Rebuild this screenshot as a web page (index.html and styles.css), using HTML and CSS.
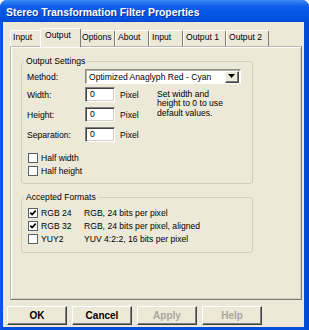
FILE: index.html
```html
<!DOCTYPE html>
<html>
<head>
<meta charset="utf-8">
<title>Stereo Transformation Filter Properties</title>
<link rel="stylesheet" href="styles.css">
</head>
<body>
<div class="window">
  <div class="titlebar">Stereo Transformation Filter Properties</div>
  <div class="client">
    <div class="tabs">
      <div class="tab">Input</div>
      <div class="tab sel">Output</div>
      <div class="tab">Options</div>
      <div class="tab">About</div>
      <div class="tab">Input</div>
      <div class="tab">Output 1</div>
      <div class="tab">Output 2</div>
    </div>
    <div class="panel">
      <fieldset class="group g1">
        <legend>Output Settings</legend>
        <div class="gbody g1body">
          <div class="method">
            <span class="lbl">Method:</span>
            <div class="combo">
              <span class="combo-text">Optimized Anaglyph Red - Cyan</span>
              <span class="drop"><svg width="7" height="4" viewBox="0 0 7 4"><path d="M0 0H7L3.5 4Z" fill="#000"/></svg></span>
            </div>
          </div>
          <div class="fields">
            <span class="lbl r1">Width:</span><div class="edit r1">0</div><span class="unit r1">Pixel</span>
            <span class="lbl r2">Height:</span><div class="edit r2">0</div><span class="unit r2">Pixel</span>
            <span class="lbl r3">Separation:</span><div class="edit r3">0</div><span class="unit r3">Pixel</span>
            <p class="note">Set width and<br>height to 0 to use<br>default values.</p>
          </div>
          <div class="checks">
            <div class="chk"><svg class="box" width="10" height="10" viewBox="0 0 10 10"><rect x="0.5" y="0.5" width="9" height="9" fill="#fff" stroke="#56606b"/></svg><span>Half width</span></div>
            <div class="chk"><svg class="box" width="10" height="10" viewBox="0 0 10 10"><rect x="0.5" y="0.5" width="9" height="9" fill="#fff" stroke="#56606b"/></svg><span>Half height</span></div>
          </div>
        </div>
      </fieldset>
      <fieldset class="group g2">
        <legend>Accepted Formats</legend>
        <div class="gbody formats">
          <svg class="box" width="10" height="10" viewBox="0 0 10 10"><rect x="0.5" y="0.5" width="9" height="9" fill="#fff" stroke="#56606b"/><path d="M2.3 4.6L4.1 6.6L7.7 2.6" fill="none" stroke="#000" stroke-width="1.6"/></svg>
          <span>RGB 24</span><span>RGB, 24 bits per pixel</span>
          <svg class="box" width="10" height="10" viewBox="0 0 10 10"><rect x="0.5" y="0.5" width="9" height="9" fill="#fff" stroke="#56606b"/><path d="M2.3 4.6L4.1 6.6L7.7 2.6" fill="none" stroke="#000" stroke-width="1.6"/></svg>
          <span>RGB 32</span><span>RGB, 24 bits per pixel, aligned</span>
          <svg class="box" width="10" height="10" viewBox="0 0 10 10"><rect x="0.5" y="0.5" width="9" height="9" fill="#fff" stroke="#56606b"/></svg>
          <span>YUY2</span><span>YUV 4:2:2, 16 bits per pixel</span>
        </div>
      </fieldset>
    </div>
    <div class="buttons">
      <button class="btn">OK</button>
      <button class="btn">Cancel</button>
      <button class="btn dis">Apply</button>
      <button class="btn dis">Help</button>
    </div>
  </div>
</div>
</body>
</html>
```
FILE: styles.css
```css
html, body {
  margin: 0;
  padding: 0;
  background: #fff;
}
body {
  font-family: "Liberation Sans", Arial, sans-serif;
  font-size: 8.6px;
  color: #000;
}
.window {
  width: 309px;
  height: 330px;
  background: linear-gradient(90deg, #0A5BE2 0, #0050DC 3px, #0050DC 304px, #0046C8 309px);
  border-radius: 7px 7px 0 0;
  display: flex;
  flex-direction: column;
  overflow: hidden;
}
.titlebar {
  height: 22px;
  box-sizing: border-box;
  padding: 6px 0 0 6px;
  background: linear-gradient(180deg, #3D8FF6 0, #2C7DF3 2px, #0E60E8 6px, #0556E6 12px, #0454E4 18px, #0048D2 22px);
  color: #fff;
  font-weight: bold;
  font-size: 10.4px;
  line-height: 14px;
  text-shadow: 1px 1px 0 #0B2F96;
  white-space: nowrap;
}
.client {
  flex: 1;
  margin: 0 5px 3px 3px;
  background: #ECE9D8;
  padding: 8px 2px 0 4px;
  display: flex;
  flex-direction: column;
}
.tabs {
  display: grid;
  grid-template-columns: 32px 37px 36px 34px 34px 43px 43px;
  grid-template-rows: 16px;
  margin-left: 3px;
  align-items: end;
}
.tab {
  box-sizing: border-box;
  height: 16px;
  border-top: 1px solid #fff;
  border-left: 1px solid #fff;
  border-right: 1px solid #7d7b72;
  border-radius: 2px 2px 0 0;
  padding: 1px 0 0 2px;
  line-height: 11px;
  white-space: nowrap;
}
.tab.sel {
  position: relative;
  z-index: 1;
  height: 19px;
  margin: 0 -2px -1px -2px;
  padding-left: 4px;
  background: #ECE9D8;
}
.panel {
  box-sizing: border-box;
  height: 254px;
  margin-left: 3px;
  border: 1px solid;
  border-color: #BCB9AC #7d7b72 #7d7b72 #BCB9AC;
  box-shadow: inset 1px 1px #fff, inset -1px -1px #D4D0C8;
  padding: 9px 0 0 10px;
}
.group {
  box-sizing: border-box;
  width: 232px;
  margin: 0;
  border: 1px solid #D0D0BF;
  border-radius: 3px;
  padding: 0 0 0 2px;
  min-inline-size: 0;
}
.group legend {
  padding: 0 2px;
  line-height: 10px;
  font-size: 8.6px;
}
.g2 {
  margin-top: 8px;
}
.gbody {
  padding-left: 3px;
}
.g1body {
  padding-top: 3px;
  padding-bottom: 6px;
}
.method {
  display: flex;
  align-items: center;
  height: 15px;
}
.method .lbl {
  width: 58px;
}
.combo {
  box-sizing: border-box;
  width: 156px;
  height: 15px;
  background: #fff;
  border: 1px solid;
  border-color: #8e8c84 #fff #fff #8e8c84;
  box-shadow: inset 1px 1px #B5B2A6;
  display: flex;
  align-items: center;
  padding: 0 1px 0 3px;
}
.combo-text {
  flex: 1;
  white-space: nowrap;
}
.drop {
  box-sizing: border-box;
  width: 14px;
  height: 12px;
  background: #ECE9D8;
  border: 1px solid;
  border-color: #fff #404040 #404040 #fff;
  box-shadow: inset -1px -1px #808080;
  display: flex;
  align-items: center;
  justify-content: center;
  padding: 0 1px 1px 0;
}
.drop svg {
  display: block;
}
.fields {
  display: grid;
  grid-template-columns: 58px 30px 42px auto;
  grid-template-rows: 15px 15px 15px;
  row-gap: 5px;
  margin-top: 3px;
  align-items: center;
}
.edit {
  box-sizing: border-box;
  height: 15px;
  background: #fff;
  border: 1px solid;
  border-color: #808080 #fff #fff #808080;
  box-shadow: inset 1px 1px #404040, inset -1px -1px #D4D0C8;
  padding-left: 4px;
  line-height: 13px;
}
.unit {
  padding-left: 5px;
}
.r1 { grid-row: 1; }
.r2 { grid-row: 2; }
.r3 { grid-row: 3; }
.note {
  grid-column: 4;
  grid-row: 1 / span 3;
  align-self: start;
  margin: 0;
  padding-top: 3px;
  line-height: 9.3px;
}
.checks {
  margin-top: 9px;
}
.chk {
  display: flex;
  align-items: center;
  height: 13px;
}
.box {
  display: block;
  margin-left: 1px;
}
.chk span {
  margin-left: 3px;
}
.formats {
  display: grid;
  grid-template-columns: 14px 43px auto;
  grid-auto-rows: 13px;
  align-items: center;
  padding-top: 4px;
  padding-bottom: 7px;
  white-space: nowrap;
}
.buttons {
  display: flex;
  gap: 5px;
  margin-top: 6px;
}
.btn {
  box-sizing: border-box;
  width: 60px;
  height: 19px;
  margin: 0;
  padding: 0;
  background: #ECE9D8;
  border: 1px solid;
  border-color: #fff #404040 #404040 #fff;
  box-shadow: inset -1px -1px #808080;
  font-family: "Liberation Sans", Arial, sans-serif;
  font-weight: bold;
  font-size: 10px;
  color: #000;
  border-radius: 0;
}
.btn.dis {
  color: #A9A79C;
}
```
